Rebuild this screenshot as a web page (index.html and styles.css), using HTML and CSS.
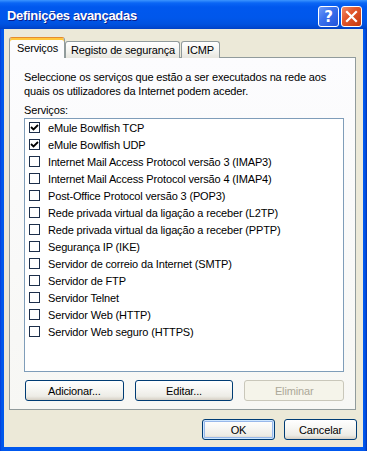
FILE: index.html
```html
<!DOCTYPE html>
<html lang="pt">
<head>
<meta charset="utf-8">
<title>Definições avançadas</title>
<link rel="stylesheet" href="styles.css">
</head>
<body>
<div class="window">
  <div class="titlebar">
    <div class="title">Definições avançadas</div>
    <div class="tb-btns">
      <div class="tb-btn help">?</div>
      <div class="tb-btn close">
        <svg width="13" height="13" viewBox="0 0 13 13"><path d="M2 2 L11 11 M11 2 L2 11" stroke="#fff" stroke-width="2.2" stroke-linecap="square"/></svg>
      </div>
    </div>
  </div>
  <div class="client">
    <div class="tabs">
      <div class="tab active t1">Serviços</div>
      <div class="tab t2">Registo de segurança</div>
      <div class="tab t3">ICMP</div>
    </div>
    <div class="panel">
      <p class="intro">Seleccione os serviços que estão a ser executados na rede aos<br>quais os utilizadores da Internet podem aceder.</p>
      <div class="label">Serviços:</div>
      <div class="list">
        <div class="row"><span class="cb checked"><svg width="9" height="9" viewBox="0 0 9 9"><path d="M1 4 L3.5 6.5 L8 2" fill="none" stroke="#000" stroke-width="1.8"/></svg></span>eMule Bowlfish TCP</div>
        <div class="row"><span class="cb checked"><svg width="9" height="9" viewBox="0 0 9 9"><path d="M1 4 L3.5 6.5 L8 2" fill="none" stroke="#000" stroke-width="1.8"/></svg></span>eMule Bowlfish UDP</div>
        <div class="row"><span class="cb"></span>Internet Mail Access Protocol versão 3 (IMAP3)</div>
        <div class="row"><span class="cb"></span>Internet Mail Access Protocol versão 4 (IMAP4)</div>
        <div class="row"><span class="cb"></span>Post-Office Protocol versão 3 (POP3)</div>
        <div class="row"><span class="cb"></span>Rede privada virtual da ligação a receber (L2TP)</div>
        <div class="row"><span class="cb"></span>Rede privada virtual da ligação a receber (PPTP)</div>
        <div class="row"><span class="cb"></span>Segurança IP (IKE)</div>
        <div class="row"><span class="cb"></span>Servidor de correio da Internet (SMTP)</div>
        <div class="row"><span class="cb"></span>Servidor de FTP</div>
        <div class="row"><span class="cb"></span>Servidor Telnet</div>
        <div class="row"><span class="cb"></span>Servidor Web (HTTP)</div>
        <div class="row"><span class="cb"></span>Servidor Web seguro (HTTPS)</div>
      </div>
      <div class="panel-btns">
        <button class="btn wide">Adicionar...</button>
        <button class="btn wide">Editar...</button>
        <button class="btn wide last" disabled>Eliminar</button>
      </div>
    </div>
    <div class="footer">
      <button class="btn small default">OK</button>
      <button class="btn small">Cancelar</button>
    </div>
  </div>
</div>
</body>
</html>
```
FILE: styles.css
```css
* { box-sizing: border-box; margin: 0; padding: 0; }
html, body { width: 367px; height: 451px; overflow: hidden; background: #fff; }
body {
  font-family: "Liberation Sans", Arial, sans-serif;
  font-size: 11px;
  letter-spacing: -0.15px;
  color: #000;
}
.window {
  width: 367px;
  height: 451px;
  display: flex;
  flex-direction: column;
  background: linear-gradient(to right, #0831D9 0, #0055E5 1px, #0058EE 3px, #0058EE 364px, #0046D5 366px, #002FA8 367px);
}
.titlebar {
  height: 29px;
  flex: none;
  display: flex;
  align-items: flex-start;
  padding: 0 5px 0 7px;
  color: #fff;
  background: linear-gradient(to bottom, #3D95FF 0, #2A85FB 1px, #0A66F5 3px, #0058EE 7px, #0057EB 18px, #0052E0 24px, #0049D3 27px, #0040C4 29px);
}
.title {
  flex: 1;
  font-weight: bold;
  font-size: 13px;
  line-height: 16px;
  margin-top: 8px;
  text-shadow: 1px 1px 0 #0A1E8C;
  letter-spacing: -0.3px;
}
.tb-btns { display: flex; gap: 2px; margin-top: 6px; }
.tb-btn {
  width: 21px;
  height: 21px;
  border: 1px solid #fff;
  border-radius: 3px;
  display: flex;
  align-items: center;
  justify-content: center;
  color: #fff;
  letter-spacing: 0;
}
.help {
  background: linear-gradient(135deg, #6F9CF8 0, #3C73EE 40%, #2052DA 100%);
  font-family: "DejaVu Sans", sans-serif;
  font-weight: bold;
  font-size: 15px;
}
.close {
  background: linear-gradient(135deg, #F08B69 0, #E2572D 40%, #C4390E 100%);
}
.client {
  flex: 1;
  margin: 0 4px 4px;
  background: #ECE9D8;
  padding: 8px 6px 7px 5px;
  display: flex;
  flex-direction: column;
}
.tabs {
  display: flex;
  align-items: flex-end;
  height: 21px;
  position: relative;
  z-index: 1;
}
.tab {
  height: 17px;
  border: 1px solid #919B9C;
  border-bottom: none;
  border-radius: 3px 3px 0 0;
  background: linear-gradient(to bottom, #FFFFFF, #F3F3EF 60%, #E6E5DE);
  padding: 2px 0 0 5px;
  line-height: 13px;
  white-space: nowrap;
}
.tab.active {
  height: 21px;
  background: #FCFCFE;
  border-top-color: #E68B2C;
  box-shadow: inset 0 2px 0 #FFC73C;
  padding: 4px 0 0 7px;
}
.t1 { width: 56px; }
.t2 { width: 115px; }
.t3 { width: 39px; margin-left: 1px; }
.panel {
  width: 347px;
  height: 353px;
  margin-top: -1px;
  border: 1px solid #919B9C;
  background: linear-gradient(to bottom, #FCFCFE, #F7F7F4);
  padding: 12px 11px 8px 14px;
  display: flex;
  flex-direction: column;
}
.intro { line-height: 14px; white-space: nowrap; }
.label { margin-top: 5px; line-height: 15px; }
.list {
  width: 320px;
  height: 254px;
  border: 1px solid #7F9DB9;
  background: #fff;
  padding-left: 4px;
}
.row {
  height: 17px;
  display: flex;
  align-items: center;
  gap: 8px;
  white-space: nowrap;
}
.cb {
  width: 11px;
  height: 11px;
  border: 1px solid #1C2E4A;
  background: #fff;
  display: flex;
  align-items: center;
  justify-content: center;
  flex: none;
}
.panel-btns {
  display: flex;
  gap: 11px;
  margin-top: 8px;
  padding-left: 1px;
}
.btn {
  height: 21px;
  border: 1px solid #003C74;
  border-radius: 3px;
  background: linear-gradient(to bottom, #FFFFFF 0, #F7F7F4 40%, #EDECE6 80%, #D6D0C5 100%);
  font: inherit;
  letter-spacing: inherit;
  color: #000;
  display: flex;
  align-items: center;
  justify-content: center;
}
.wide { width: 99px; }
.last { width: 100px; }
.btn:disabled {
  border-color: #C9C7BA;
  color: #ACA899;
  background: #F5F4EA;
}
.footer {
  display: flex;
  justify-content: flex-end;
  gap: 9px;
  margin-top: 9px;
}
.small { width: 73px; }
.default { box-shadow: inset 0 0 0 1px #CEE7FF, inset 0 0 0 2px #98B8EA; }
```
